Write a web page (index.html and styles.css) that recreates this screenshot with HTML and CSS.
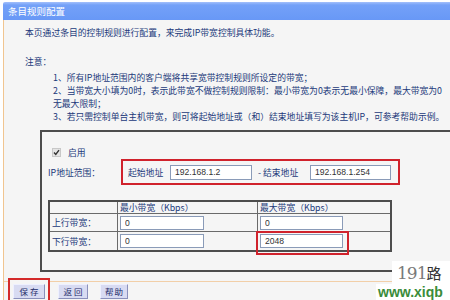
FILE: index.html
```html
<!DOCTYPE html>
<html lang="zh">
<head>
<meta charset="utf-8">
<title>条目规则配置</title>
<link rel="stylesheet" href="styles.css">
</head>
<body>
<div class="header">条目规则配置</div>
<div class="panel">
  <div class="intro">本页通过条目的控制规则进行配置，来完成IP带宽控制具体功能。</div>
  <div class="note">注意：</div>
  <div class="list">
    <div>1、所有IP地址范围内的客户端将共享宽带控制规则所设定的带宽；</div>
    <div>2、当带宽大小填为0时，表示此带宽不做控制规则限制：最小带宽为0表示无最小保障，最大带宽为0</div>
    <div>无最大限制；</div>
    <div>3、若只需控制单台主机带宽，则可将起始地址或（和）结束地址填写为该主机IP，可参考帮助示例。</div>
  </div>
  <div class="box">
    <div class="enable"><span class="check"><svg width="7" height="7" viewBox="0 0 7 7"><path d="M1 3.5 L2.8 5.5 L6 1.2" fill="none" stroke="#333" stroke-width="1.4"/></svg></span><span class="enable-label">启用</span></div>
    <div class="iprow">
      <span class="iplabel">IP地址范围：</span>
      <div class="redbox">
        <span class="lbl">起始地址</span>
        <input class="ip" type="text" value="192.168.1.2">
        <span class="sep">-&nbsp;结束地址</span>
        <input class="ip ip2" type="text" value="192.168.1.254">
      </div>
    </div>
    <table class="bw">
      <tr class="hrow"><td class="c1"></td><td class="c2">最小带宽（Kbps）</td><td class="c3">最大带宽（Kbps）</td></tr>
      <tr class="r1"><td>上行带宽：</td><td><input class="num" type="text" value="0"></td><td><input class="num num2" type="text" value="0"></td></tr>
      <tr class="r2"><td>下行带宽：</td><td><input class="num" type="text" value="0"></td><td class="mark-cell"><input class="num num2" type="text" value="2048"><span class="mark"></span></td></tr>
    </table>
  </div>
  <div class="footer">
    <div class="save-mark"><button class="btn b1">保存</button></div>
    <button class="btn b2">返回</button>
    <button class="btn b3">帮助</button>
  </div>
</div>
<div class="watermark">
  <div class="wm1">191<span class="lu">路</span></div>
  <div class="wm2">www.xiqb</div>
</div>
</body>
</html>
```
FILE: styles.css
```css
html, body {
  margin: 0;
  padding: 0;
}
body {
  width: 450px;
  height: 300px;
  overflow: hidden;
  background: #fff;
  position: relative;
  font-family: "Noto Sans CJK SC", "Liberation Sans", sans-serif;
  font-size: 8.8px;
  color: #22397a;
}
.header {
  margin: 2px 0 0 3px;
  height: 18px;
  line-height: 18px;
  padding-left: 5px;
  color: #fff;
  font-size: 9.5px;
  background: linear-gradient(#a3c0fb 0, #74a1f8 3px, #6898f6 100%);
  border-radius: 2px 0 0 0;
}
.panel {
  margin-left: 3px;
  border-left: 1px solid #f1c590;
  background: #f5f5f5;
  padding: 6px 0 0 21px;
  height: 280px;
  width: 600px;
}
.intro {
  line-height: 14px;
  white-space: nowrap;
}
.note {
  margin-top: 15px;
  line-height: 14px;
}
.list {
  margin-top: 2px;
  padding-left: 28px;
  line-height: 13px;
  white-space: nowrap;
}
.box {
  margin: 7px 0 0 15px;
  border: 2px solid #4d4d4d;
  width: 500px;
  height: 138px;
  padding-left: 6px;
}
.enable {
  margin-top: 14px;
  height: 13px;
  display: flex;
  align-items: center;
}
.check {
  margin-left: 4px;
  width: 7px;
  height: 7px;
  background: #e4e4e4;
  border: 1px solid #c8c8c8;
  display: flex;
}
.enable-label {
  margin-left: 7px;
}
.iprow {
  display: flex;
  align-items: center;
  height: 26px;
}
.iplabel {
  width: 73px;
  flex-shrink: 0;
}
.redbox {
  box-sizing: border-box;
  width: 279px;
  height: 26px;
  border: 2px solid #d0222c;
  display: flex;
  align-items: center;
  padding-left: 5px;
  flex-shrink: 0;
}
.redbox > * {
  flex-shrink: 0;
}
.lbl {
  width: 42px;
}
input {
  box-sizing: border-box;
  margin: 0;
  background: #fff;
  border: 1px solid #8a9bb8;
  font-family: "Liberation Sans", sans-serif;
  font-size: 8.6px;
  color: #333;
  padding: 0 0 0 4px;
  outline: none;
}
.ip {
  width: 82px;
  height: 15px;
}
.sep {
  width: 58px;
  padding-left: 6px;
  box-sizing: border-box;
}
.ip2 {
  width: 81px;
}
.bw {
  margin-top: 15px;
  border-collapse: collapse;
  border: 2px solid #4d4d4d;
  width: 344px;
  table-layout: fixed;
}
.bw td {
  border: 1px solid #6a6a6a;
  padding: 0 0 0 2px;
  white-space: nowrap;
}
.c1 { width: 65px; }
.c2 { width: 137px; }
.hrow td { height: 11px; line-height: 11px; }
.r1 td { height: 17px; }
.r2 td { height: 18px; }
.num {
  width: 84px;
  height: 14px;
  display: block;
}
.num2 {
  width: 83px;
}
.mark-cell {
  position: relative;
}
.mark {
  position: absolute;
  left: -2px;
  top: -1px;
  width: 89px;
  height: 20px;
  border: 2px solid #d0222c;
}
.footer {
  margin: 9px 0 0 -21px;
  border-top: 1px solid #f2cfa8;
  padding-left: 4px;
  display: flex;
  align-items: flex-start;
}
.save-mark {
  margin-top: -4px;
  border: 2px solid #d42a2a;
  padding: 4px 3px 4px 3px;
  background: #f5f5f5;
}
.btn {
  height: 15px;
  padding: 0;
  margin: 0;
  font-family: "Noto Sans CJK SC", sans-serif;
  font-size: 8.5px;
  letter-spacing: 2px;
  text-indent: 2px;
  color: #1e2c6a;
  background: #d8dbf2;
  border: 1px solid;
  border-color: #eef0ff #8a90bc #8a90bc #eef0ff;
  line-height: 13px;
  white-space: nowrap;
  overflow: visible;
  flex-shrink: 0;
}
.b1 { width: 32px; }
.b2 { width: 30px; margin: 2px 0 0 8px; }
.b3 { width: 28px; margin: 2px 0 0 12px; letter-spacing: 1px; text-indent: 1px; }
.watermark {
  position: absolute;
  right: 0;
  bottom: 0;
  width: 58px;
  height: 39px;
  background: #fff;
}
.wm1 {
  font-family: "DejaVu Serif", serif;
  font-size: 17px;
  line-height: 23px;
  height: 23px;
  color: #7a7a7a;
  padding-left: 5px;
  letter-spacing: -1px;
  white-space: nowrap;
}
.lu {
  color: #333;
  font-family: "Noto Sans CJK SC", sans-serif;
  font-size: 15px;
}
.wm2 {
  margin-left: -16px;
  padding-left: 2px;
  height: 16px;
  line-height: 16px;
  background: #fff;
  font-family: "Liberation Sans", sans-serif;
  font-weight: bold;
  font-size: 14px;
  color: #3a8c3a;
  white-space: nowrap;
}
```
